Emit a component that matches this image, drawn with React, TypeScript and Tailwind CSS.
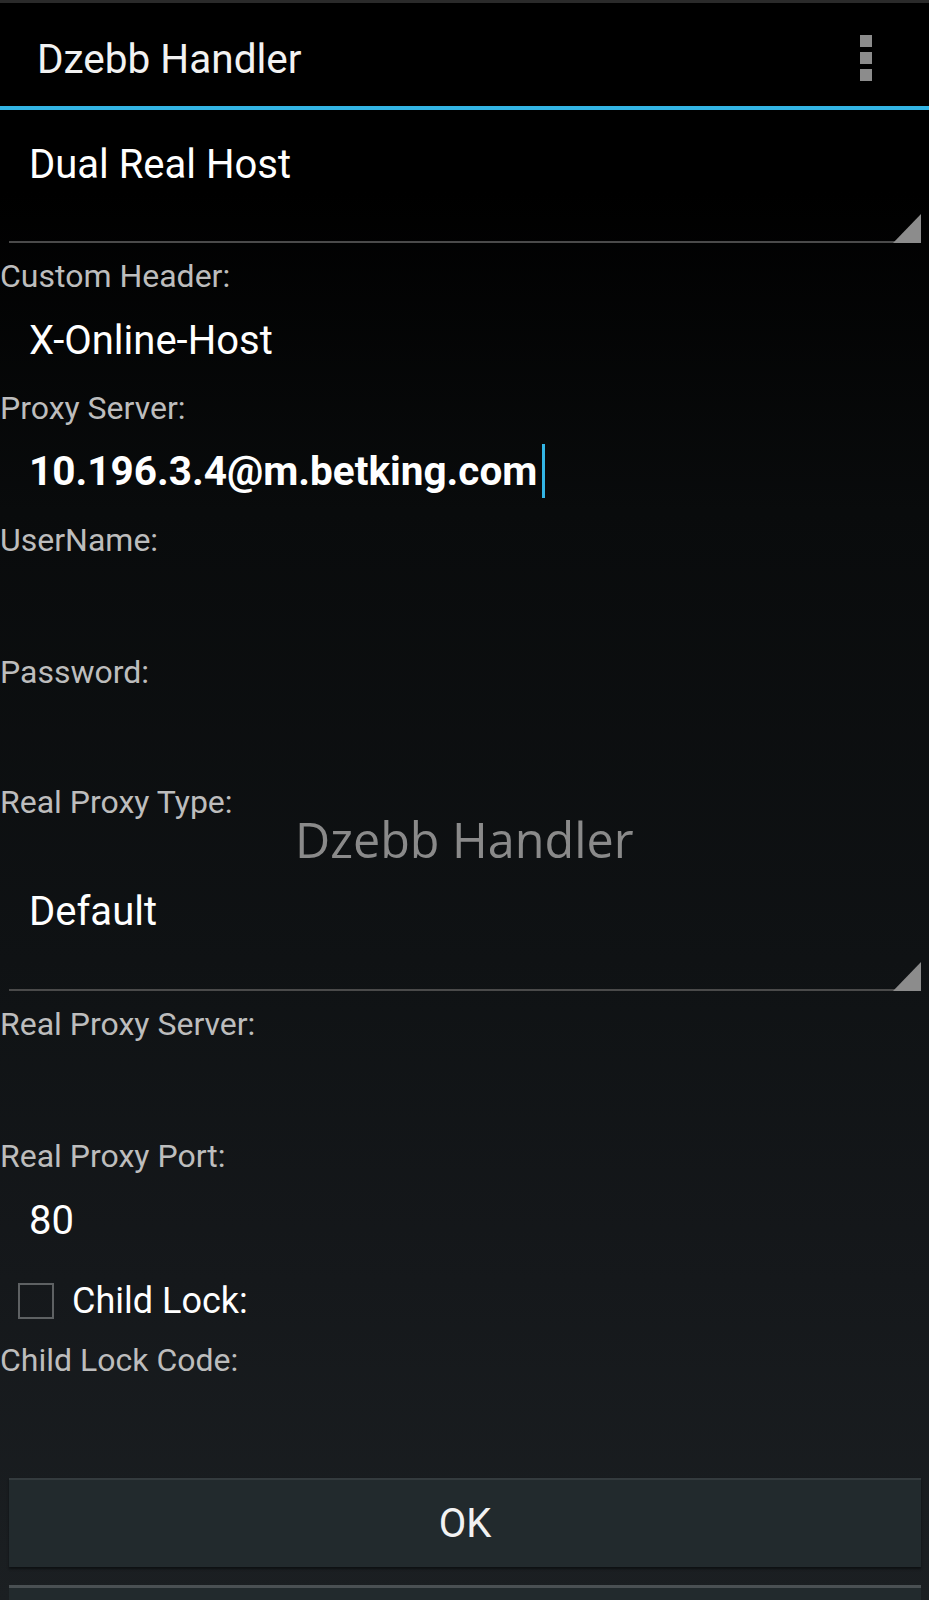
import { ReactNode } from "react";

const roboto = "font-['Roboto','Liberation_Sans',sans-serif]";

function Label({ children }: { children: ReactNode }) {
  return (
    <div className={`h-[46px] text-[32px] leading-[46px] text-[#bdbdbd] ${roboto}`}>
      {children}
    </div>
  );
}

function Field({ children, bold, h = "h-[86px]", pt = "pt-[18px]" }: { children?: ReactNode; bold?: boolean; h?: string; pt?: string }) {
  return (
    <div
      className={`${h} ${pt} pl-[29px] leading-[48px] text-white ${roboto} ${
        bold ? "text-[40.5px] font-bold" : "text-[40px]"
      }`}
    >
      {children}
    </div>
  );
}

function Spinner({ value, top, height }: { value: string; top: string; height: string }) {
  return (
    <div className={`relative mr-[8px] ml-[9px] ${height} ${top} border-b-2 border-[#4a4a4a]`}>
      <div className={`pl-[20px] text-[40px] leading-[48px] text-white ${roboto}`}>{value}</div>
      <svg
        className="absolute right-0 bottom-[-2px]"
        width="28"
        height="29"
        viewBox="0 0 28 29"
      >
        <polygon points="28,0 28,29 0,29" fill="#8c8c8c" />
      </svg>
    </div>
  );
}

export default function App() {
  return (
    <div className="relative w-[929px] h-[1600px] overflow-hidden bg-[linear-gradient(to_bottom,#000_0%,#000_12%,#090b0c_32%,#0f1214_60%,#15181b_80%,#1b1f22_100%)]">
      {/* action bar */}
      <div className="h-[3px] bg-[#2a2a2a]" />
      <div className="flex h-[103px] items-center justify-between bg-black pt-[9px] pl-[37px] pr-[57px]">
        <span className={`text-[40.5px] leading-[48px] text-[#f2f2f2] ${roboto}`}>Dzebb Handler</span>
        <div className="flex flex-col gap-[5px] pb-[3px]">
          <div className="h-[12px] w-[12px] bg-[#8c8c8c]" />
          <div className="h-[12px] w-[12px] bg-[#8c8c8c]" />
          <div className="h-[12px] w-[12px] bg-[#8c8c8c]" />
        </div>
      </div>
      <div className="h-[4px] bg-[#33b5e5]" />

      {/* form */}
      <Spinner value="Dual Real Host" top="pt-[31px]" height="h-[133px]" />
      <div className="h-[10px]" />
      <Label>Custom Header:</Label>
      <Field>X-Online-Host</Field>
      <Label>Proxy Server:</Label>
      <Field bold pt="pt-[13px]">
        <span className="inline-flex items-center">
          10.196.3.4@m.betking.com
          <span className="ml-[5px] inline-block h-[54px] w-[3px] bg-[#33b5e5]" />
        </span>
      </Field>
      <Label>UserName:</Label>
      <Field />
      <Label>Password:</Label>
      <Field h="h-[84px]" />
      <Label>Real Proxy Type:</Label>
      <Spinner value="Default" top="pt-[63px]" height="h-[166px]" />
      <div className="h-[10px]" />
      <Label>Real Proxy Server:</Label>
      <Field />
      <Label>Real Proxy Port:</Label>
      <Field>80</Field>
      <div className="flex h-[72px] items-center pl-[18px]">
        <div className="h-[36px] w-[36px] border-2 border-[#5e6163]" />
        <span className={`ml-[18px] text-[36px] leading-[48px] text-white ${roboto}`}>Child Lock:</span>
      </div>
      <Label>Child Lock Code:</Label>
      <Field />

      {/* buttons */}
      <div className="mr-[8px] ml-[9px] mt-[9px] flex h-[89px] items-center justify-center border-t-2 border-[#343b3e] bg-[#222a2d] shadow-[0_2px_2px_#0e1113]">
        <span className={`text-[40px] leading-[48px] text-[#f2f2f2] ${roboto}`}>OK</span>
      </div>
      <div className="mr-[8px] ml-[9px] mt-[18px] h-[40px] border-t-[3px] border-[#4a5053] bg-[#222a2d]" />

      {/* watermark */}
      <div className="pointer-events-none absolute left-[295px] top-[811px] font-['Open_Sans',sans-serif] text-[48.5px] leading-[56px] text-[#8a8a8a]">
        Dzebb Handler
      </div>
    </div>
  );
}
